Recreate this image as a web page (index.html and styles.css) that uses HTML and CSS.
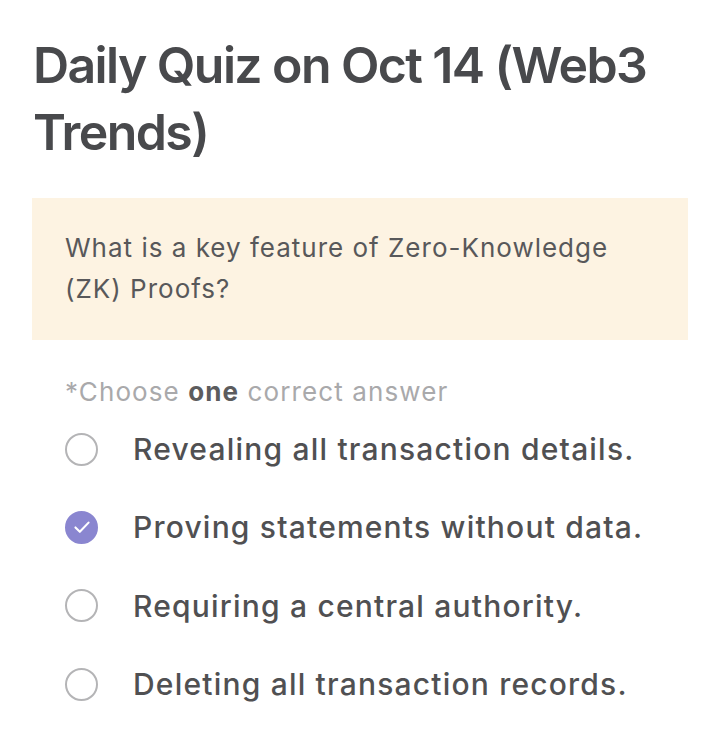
FILE: index.html
```html
<!DOCTYPE html>
<html>
<head>
<meta charset="utf-8">
<link rel="stylesheet" href="styles.css">
</head>
<body>
<main class="quiz">
  <h1 class="title">Daily Quiz on Oct 14 (Web3 Trends)</h1>
  <div class="question">What is a key feature of Zero-Knowledge (ZK) Proofs?</div>
  <p class="hint">*Choose <b>one</b> correct answer</p>
  <ul class="options">
    <li class="option"><span class="radio"></span><span class="label">Revealing all transaction details.</span></li>
    <li class="option"><span class="radio checked"><svg viewBox="0 0 32 32"><path d="M8.5 16.5l5 5 10-10.5" fill="none" stroke="#fff" stroke-width="2.4" stroke-linecap="round" stroke-linejoin="round"/></svg></span><span class="label">Proving statements without data.</span></li>
    <li class="option"><span class="radio"></span><span class="label">Requiring a central authority.</span></li>
    <li class="option"><span class="radio"></span><span class="label">Deleting all transaction records.</span></li>
  </ul>
</main>
</body>
</html>
```
FILE: styles.css
```css
html, body {
  margin: 0;
  padding: 0;
  background: #ffffff;
}
.quiz {
  font-family: Inter, "Noto Sans", sans-serif;
  padding: 32px 32px 0 32px;
}
.title {
  margin: 0;
  font-size: 50px;
  line-height: 67px;
  font-weight: 600;
  color: #48494c;
  letter-spacing: -1.6px;
  padding-left: 1px;
}
.question {
  margin-top: 32px;
  background: #fdf3e2;
  padding: 29px 33px 31px 33px;
  font-size: 26px;
  line-height: 41px;
  color: #58585a;
  font-weight: 400;
  letter-spacing: 1px;
}
.hint {
  margin: 35px 0 0 33px;
  font-size: 26px;
  line-height: 34px;
  color: #a9a9ab;
  letter-spacing: 1.1px;
}
.hint b {
  font-weight: 700;
  color: #5c5c5e;
}
.options {
  list-style: none;
  margin: 1px 0 0 0;
  padding: 0;
}
.option {
  display: flex;
  align-items: center;
  height: 78.3px;
}
.radio {
  box-sizing: border-box;
  width: 33px;
  height: 33px;
  border-radius: 50%;
  border: 2.5px solid #b4b4b6;
  margin-left: 33px;
  margin-right: 35px;
  display: flex;
  align-items: center;
  justify-content: center;
  flex: none;
}
.radio.checked {
  background: #8a86d0;
  border-color: #8a86d0;
}
.radio svg {
  width: 28px;
  height: 28px;
}
.label {
  font-size: 30px;
  font-weight: 500;
  color: #505052;
  letter-spacing: 1.2px;
}
```
